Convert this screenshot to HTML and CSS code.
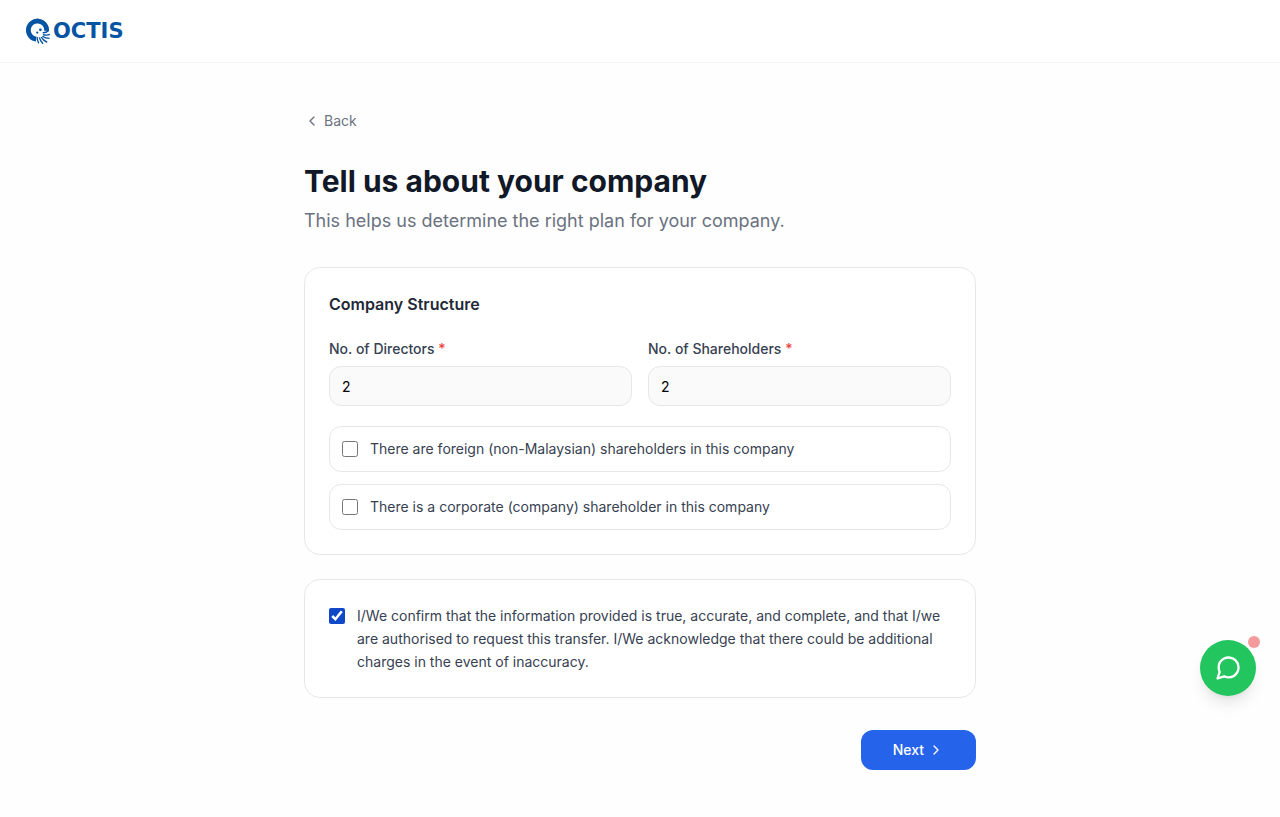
FILE: index.html
```html
<!DOCTYPE html>
<html lang="en">
<head>
<meta charset="utf-8">
<meta name="viewport" content="width=device-width, initial-scale=1">
<title>Octis – Company details</title>
<link rel="stylesheet" href="styles.css">
</head>
<body>
<header class="topbar">
  <a class="brand" href="#" aria-label="Octis">
    <svg class="brand-mark" viewBox="0 0 26 26" fill="none" stroke="currentColor" aria-hidden="true">
      <path d="M10.8 20.4A8.8 8.8 0 1 1 20.8 12.4" stroke-width="4.6"/>
      <circle cx="11.8" cy="14" r="1.1" fill="currentColor" stroke="none"/>
      <circle cx="14.8" cy="11.4" r="1.3" fill="currentColor" stroke="none"/>
      <path d="M17 14.2Q20 14.4 22.6 12.4M17.3 16Q20.5 17 24 15.8M16.8 17.6Q19.4 19.6 23.6 19.6M15.6 18.4Q17.4 21.4 21.4 23.4M13.8 18.6Q14.6 22 17.4 24.8M11.8 18.4Q11.6 21.6 13.2 24.4" stroke-width="1.3"/>
    </svg>
    <span class="brand-name">OCTIS</span>
  </a>
</header>

<main class="page">
  <button class="back" type="button">
    <svg class="icon" viewBox="0 0 24 24" aria-hidden="true"><path d="m15 18-6-6 6-6"/></svg>
    Back
  </button>
  <h1 class="title">Tell us about your company</h1>
  <p class="subtitle">This helps us determine the right plan for your company.</p>

  <form class="form">
    <section class="card structure">
      <h2 class="card-title">Company Structure</h2>
      <div class="fields">
        <div class="field">
          <label for="directors">No. of Directors <span class="required">*</span></label>
          <input id="directors" type="text" inputmode="numeric" value="2">
        </div>
        <div class="field">
          <label for="shareholders">No. of Shareholders <span class="required">*</span></label>
          <input id="shareholders" type="text" inputmode="numeric" value="2">
        </div>
      </div>
      <div class="options">
        <label class="option"><input class="check" type="checkbox"><span>There are foreign (non-Malaysian) shareholders in this company</span></label>
        <label class="option"><input class="check" type="checkbox"><span>There is a corporate (company) shareholder in this company</span></label>
      </div>
    </section>

    <section class="card">
      <label class="confirm"><input class="check" type="checkbox" checked><span>I/We confirm that the information provided is true, accurate, and complete, and that I/we are authorised to request this transfer. I/We acknowledge that there could be additional charges in the event of inaccuracy.</span></label>
    </section>

    <div class="actions">
      <button class="next" type="button">Next
        <svg class="icon" viewBox="0 0 24 24" aria-hidden="true"><path d="m9 18 6-6-6-6"/></svg>
      </button>
    </div>
  </form>
</main>

<button class="chat" type="button" aria-label="Chat with us">
  <svg class="chat-icon" viewBox="0 0 24 24" aria-hidden="true"><path d="M21 11.5a8.38 8.38 0 0 1-.9 3.8 8.5 8.5 0 0 1-7.6 4.7 8.38 8.38 0 0 1-3.8-.9L3 21l1.900-5.700a8.38 8.38 0 0 1-.9-3.8 8.5 8.5 0 0 1 4.700-7.600 8.38 8.38 0 0 1 3.800-.9h.5a8.480 8.480 0 0 1 8 8v.5z"/></svg>
  <span class="chat-dot"></span>
</button>
</body>
</html>
```
FILE: styles.css
```css
*, *::before, *::after { box-sizing: border-box; }

body {
  margin: 0;
  background: #fefefe;
  color: #111827;
  font-family: Inter, "Liberation Sans", sans-serif;
  font-size: 14px;
  line-height: 20px;
}

button, input { font: inherit; }
button { cursor: pointer; }
h1, h2, p { margin: 0; }

.topbar {
  display: flex;
  align-items: center;
  padding: 16px 24px;
  background: #ffffff;
  border-bottom: 1px solid #f3f4f6;
}

.brand {
  display: flex;
  align-items: center;
  gap: 1px;
  height: 30px;
  padding-left: 1px;
  color: #0554a3;
  text-decoration: none;
}
.brand-mark { width: 27px; height: 27px; }
.brand-name {
  font-family: "DejaVu Sans", sans-serif;
  font-size: 21px;
  font-weight: 700;
}

.page {
  max-width: 720px;
  margin: 0 auto;
  padding: 48px 24px 40px;
}

.icon {
  width: 16px;
  height: 16px;
  fill: none;
  stroke: currentColor;
  stroke-width: 2;
  stroke-linecap: round;
  stroke-linejoin: round;
}

.back {
  display: flex;
  align-items: center;
  gap: 4px;
  margin-bottom: 32px;
  padding: 0;
  border: 0;
  background: none;
  color: #6b7280;
}

.title {
  margin-bottom: 8px;
  font-size: 30px;
  line-height: 36px;
  font-weight: 700;
}
.subtitle {
  margin-bottom: 32px;
  color: #6b7280;
  font-size: 18px;
  line-height: 28px;
}

.form {
  display: flex;
  flex-direction: column;
  gap: 24px;
}

.card {
  padding: 24px;
  border: 1px solid #e5e7eb;
  border-radius: 16px;
  background: #ffffff;
}
.structure {
  display: flex;
  flex-direction: column;
  gap: 20px;
}
.card-title {
  color: #1f2937;
  font-size: 16px;
  line-height: 24px;
  font-weight: 600;
}

.fields {
  display: grid;
  grid-template-columns: 1fr 1fr;
  gap: 16px;
}
.field {
  display: flex;
  flex-direction: column;
  gap: 4px;
}
.field label {
  color: #374151;
  font-weight: 500;
  line-height: 26px;
}
.required { color: #ef4444; }
.field input {
  width: 100%;
  height: 40px;
  padding: 0 12px;
  border: 1px solid #e5e7eb;
  border-radius: 12px;
  background: #fafafa;
  color: #000000;
}

.options {
  display: flex;
  flex-direction: column;
  gap: 12px;
}
.option, .confirm {
  display: flex;
  gap: 12px;
  color: #374151;
  cursor: pointer;
}
.option {
  align-items: center;
  padding: 12px;
  border: 1px solid #e5e7eb;
  border-radius: 12px;
}
.confirm {
  align-items: flex-start;
  line-height: 23px;
}
.check {
  flex: none;
  width: 16px;
  height: 16px;
  margin: 0;
  accent-color: #1048c8;
}
.confirm .check { margin-top: 4px; }

.actions {
  display: flex;
  justify-content: flex-end;
  padding-top: 8px;
}
.next {
  display: flex;
  align-items: center;
  gap: 4px;
  height: 40px;
  padding: 0 32px;
  border: 0;
  border-radius: 12px;
  background: #2563eb;
  color: #ffffff;
  font-weight: 500;
}

/* Floating chat launcher */
.chat {
  position: fixed;
  right: 24px;
  bottom: 121px;
  display: flex;
  align-items: center;
  justify-content: center;
  width: 56px;
  height: 56px;
  padding: 0;
  border: 0;
  border-radius: 50%;
  background: #22c55e;
  color: #ffffff;
  box-shadow: 0 10px 15px -3px rgba(0, 0, 0, 0.1), 0 4px 6px -4px rgba(0, 0, 0, 0.1);
}
.chat-icon {
  width: 28px;
  height: 28px;
  fill: none;
  stroke: currentColor;
  stroke-width: 2;
  stroke-linecap: round;
  stroke-linejoin: round;
}
.chat-dot {
  position: absolute;
  top: -4px;
  right: -4px;
  width: 12px;
  height: 12px;
  border-radius: 50%;
  background: #f59a9a;
}
```
